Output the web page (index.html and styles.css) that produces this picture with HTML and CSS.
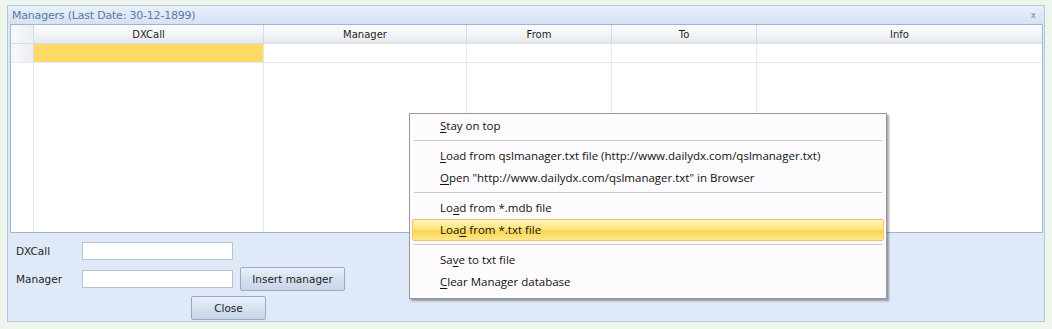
FILE: index.html
```html
<!DOCTYPE html>
<html lang="en">
<head>
  <meta charset="UTF-8" />
  <title>Managers</title>
  <link rel="stylesheet" href="styles.css">
</head>
<body>
  <div class="window">
    <div class="titlebar">
      <span class="title">Managers (Last Date: 30-12-1899)</span>
      <span class="close-x">x</span>
    </div>

    <div class="grid">
      <div class="grid-row header">
        <div class="cell ind"></div>
        <div class="cell c-dx">DXCall</div>
        <div class="cell c-man">Manager</div>
        <div class="cell c-from">From</div>
        <div class="cell c-to">To</div>
        <div class="cell c-info">Info</div>
      </div>
      <div class="grid-row">
        <div class="cell ind"></div>
        <div class="cell c-dx selected"></div>
        <div class="cell c-man"></div>
        <div class="cell c-from"></div>
        <div class="cell c-to"></div>
        <div class="cell c-info"></div>
      </div>
      <div class="grid-row filler">
        <div class="cell ind blank"></div>
        <div class="cell c-dx"></div>
        <div class="cell c-man"></div>
        <div class="cell c-from"></div>
        <div class="cell c-to"></div>
        <div class="cell c-info"></div>
      </div>
    </div>

    <div class="panel">
      <div class="form-row">
        <label class="lbl">DXCall</label>
        <input type="text" class="field" />
      </div>
      <div class="form-row">
        <label class="lbl">Manager</label>
        <input type="text" class="field" />
        <button class="btn btn-insert">Insert manager</button>
      </div>
      <div class="form-row close-row">
        <button class="btn btn-close">Close</button>
      </div>
    </div>
  </div>

  <div class="menu">
    <div class="item"><u>S</u>tay on top</div>
    <div class="sep"></div>
    <div class="item"><u>L</u>oad from qslmanager.txt file (http://www.dailydx.com/qslmanager.txt)</div>
    <div class="item"><u>O</u>pen "http://www.dailydx.com/qslmanager.txt" in Browser</div>
    <div class="sep"></div>
    <div class="item">Lo<u>a</u>d from *.mdb file</div>
    <div class="item active">Loa<u>d</u> from *.txt file</div>
    <div class="sep"></div>
    <div class="item">Sa<u>v</u>e to txt file</div>
    <div class="item"><u>C</u>lear Manager database</div>
  </div>
</body>
</html>
```

FILE: styles.css
```css
body {
  margin: 0;
  width: 1052px;
  height: 329px;
  background: #eef6ec;
  font-family: "DejaVu Sans", sans-serif;
  font-size: 10px;
  color: #1e1e1e;
  position: relative;
  overflow: hidden;
}
.window {
  position: absolute;
  left: 7px;
  top: 5px;
  width: 1038px;
  height: 317px;
  border: 1px solid #b4c8de;
  background: #dfe9f7;
  display: flex;
  flex-direction: column;
  box-sizing: border-box;
}
.titlebar {
  height: 18px;
  display: flex;
  justify-content: space-between;
  align-items: center;
  padding: 0 8px 0 4px;
  background: linear-gradient(#e8f0fb, #d5e2f3);
}
.title {
  color: #5b79a0;
  font-size: 11px;
  letter-spacing: -0.2px;
}
.close-x {
  color: #7d8a98;
  font-size: 9px;
}
.grid {
  margin: 0 1px 0 2px;
  height: 209px;
  box-sizing: border-box;
  border: 1px solid #9fb6d2;
  background: #fff;
  display: flex;
  flex-direction: column;
}
.grid-row {
  display: flex;
  height: 18px;
  flex-shrink: 0;
  border-bottom: 1px solid #e4e9ef;
}
.grid-row.header {
  background: linear-gradient(#fbfcfd, #f1f3f6 60%, #e3e7ec);
  border-bottom: 1px solid #d6dde6;
}
.grid-row.filler {
  flex: 1;
  border-bottom: none;
}
.cell {
  border-right: 1px solid #e4e9ef;
  display: flex;
  align-items: center;
  justify-content: center;
  box-sizing: border-box;
}
.header .cell {
  border-right-color: #d5dce5;
}
.ind {
  width: 23px;
  background: linear-gradient(90deg, #f7f8fa, #eceff3);
  border-right-color: #d5dce5;
}
.ind.blank {
  background: #fff;
  border-right-color: #e4e9ef;
}
.c-dx { width: 230px; }
.c-man { width: 203px; }
.c-from { width: 145px; }
.c-to { width: 145px; }
.c-info { flex: 1; border-right: none; }
.selected {
  background: #ffd966;
}
.panel {
  flex: 1;
  padding: 8px 0 0 8px;
  display: flex;
  flex-direction: column;
  gap: 8px;
}
.form-row {
  display: flex;
  align-items: center;
  height: 20px;
}
.lbl {
  width: 66px;
  font-size: 10.5px;
}
.field {
  width: 151px;
  height: 18px;
  box-sizing: border-box;
  border: 1px solid #b6c3d3;
  background: #fff;
  margin: 0;
}
.btn {
  font-family: "DejaVu Sans", sans-serif;
  font-size: 10.5px;
  color: #1e1e1e;
  height: 24px;
  border: 1px solid #9aabc1;
  border-radius: 2px;
  background: linear-gradient(#e9f0fa, #d6e1ef 50%, #c9d6e8);
  padding: 0;
}
.btn-insert {
  width: 105px;
  margin-left: 7px;
}
.close-row {
  margin-top: 1px;
  padding-left: 175px;
}
.btn-close {
  width: 75px;
}
.menu {
  position: absolute;
  left: 409px;
  top: 113px;
  width: 478px;
  height: 186px;
  box-sizing: border-box;
  background: #fdfbfd;
  border: 1px solid #979797;
  box-shadow: 2px 2px 2px rgba(0, 0, 0, 0.35);
  padding: 1px 2px;
  font-family: "Open Sans", sans-serif;
  font-size: 11.5px;
  color: #111;
}
.item {
  height: 20px;
  line-height: 20px;
  padding-left: 27px;
  border: 1px solid transparent;
  border-radius: 2px;
}
.item u {
  text-decoration-thickness: 1px;
  text-underline-offset: 2px;
}
.item.active {
  background: linear-gradient(#fff3bf, #fde57e 45%, #fbd54d 55%, #fde88d);
  border-color: #e9c96a;
}
.sep {
  height: 1px;
  background: #c9c9c9;
  border-bottom: 1px solid #fff;
  margin: 3px 2px 3px 2px;
}
```
